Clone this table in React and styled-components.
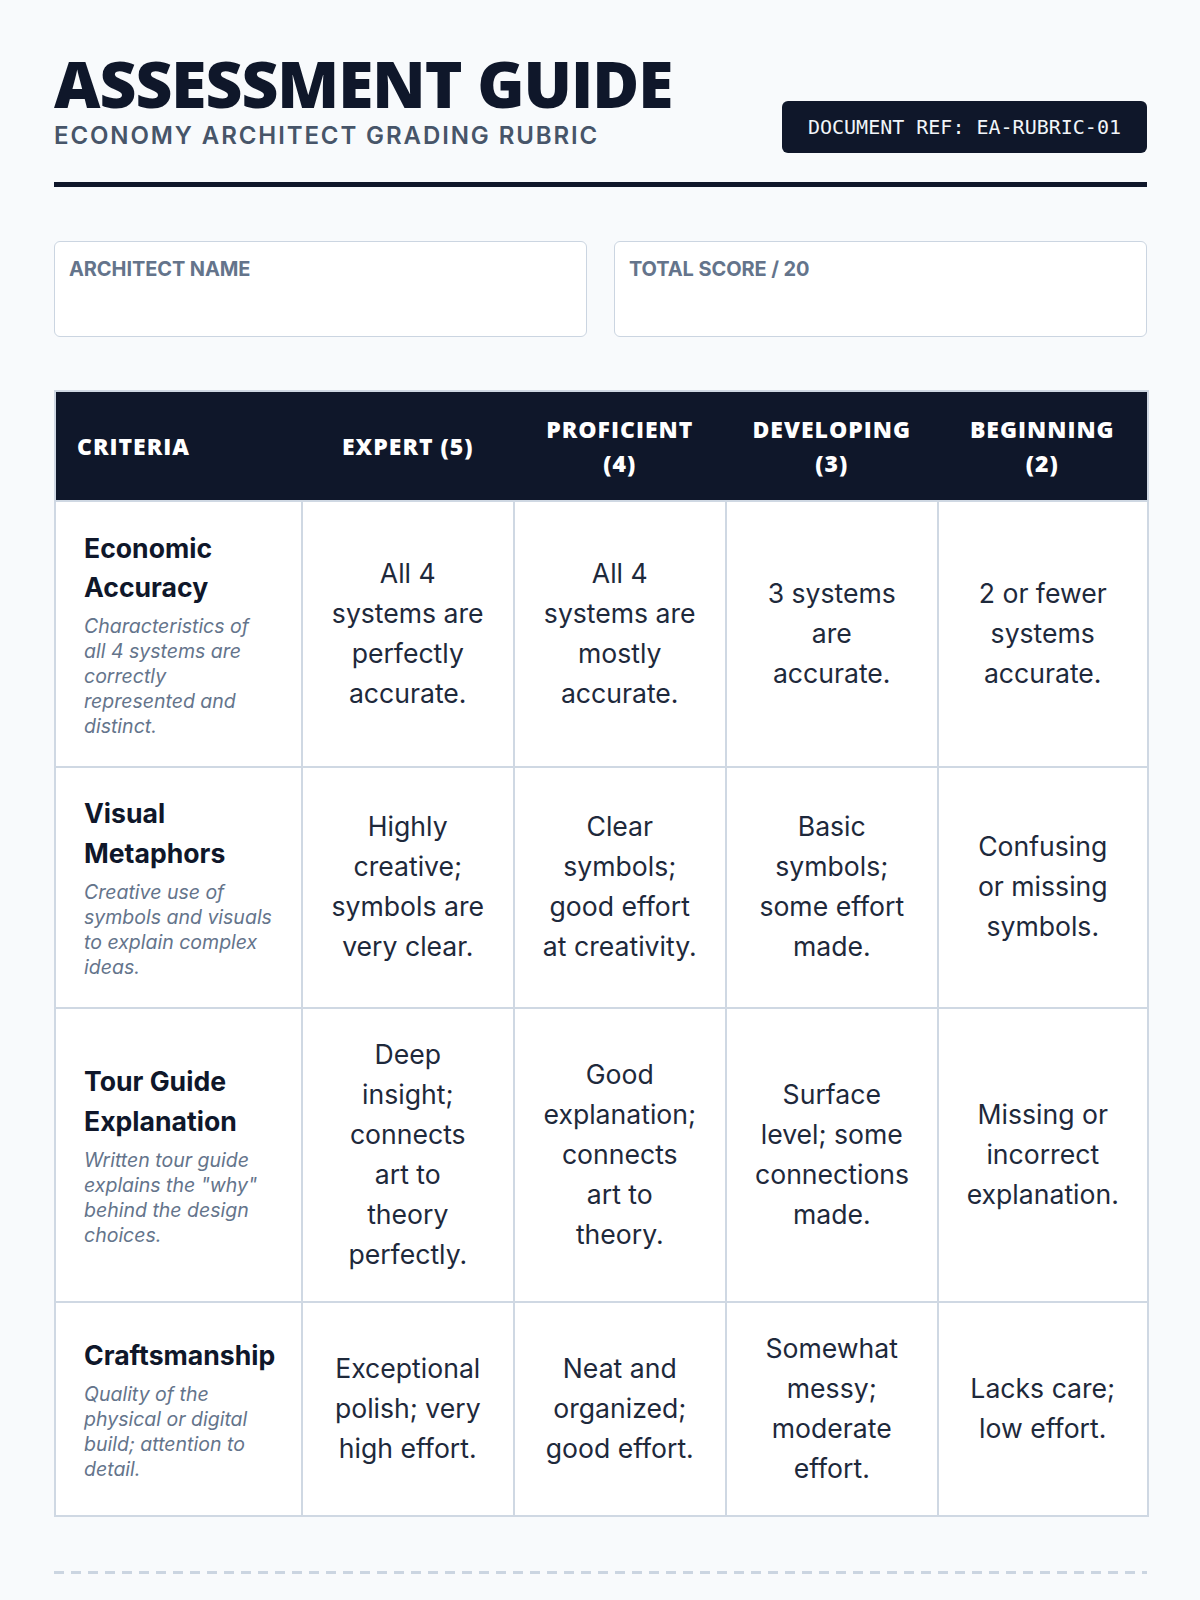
import React from 'react'
import styled, { createGlobalStyle } from 'styled-components'

const GlobalStyle = createGlobalStyle`
  body {
    margin: 0;
    background: #f8fafc;
    font-family: Inter, "Liberation Sans", sans-serif;
    color: #1e293b;
  }
`

const Page = styled.div`
  padding: 52px 53px 40px 54px;
`

const Header = styled.header`
  display: flex;
  justify-content: space-between;
  align-items: flex-end;
  padding-bottom: 29px;
  border-bottom: 5px solid #0f172a;
`

const Title = styled.h1`
  margin: 0;
  font-family: "Open Sans", sans-serif;
  font-weight: 800;
  font-size: 64px;
  line-height: 1;
  letter-spacing: -1px;
  color: #0f172a;
`

const Subtitle = styled.p`
  margin: 3px 0 0;
  font-size: 24px;
  font-weight: 600;
  line-height: 34px;
  letter-spacing: 1.9px;
  color: #475569;
`

const RefBadge = styled.div`
  display: flex;
  align-items: center;
  height: 52px;
  padding: 0 26px;
  background: #0f172a;
  color: #f1f5f9;
  border-radius: 6px;
  font-family: "DejaVu Sans Mono", monospace;
  font-size: 20px;
`

const Fields = styled.section`
  display: grid;
  grid-template-columns: 1fr 1fr;
  gap: 27px;
  margin-top: 54px;
`

const Field = styled.div`
  box-sizing: border-box;
  height: 96px;
  padding: 16px 14px;
  background: #fff;
  border: 1.5px solid #cbd5e1;
  border-radius: 6px;
`

const FieldLabel = styled.div`
  font-size: 20px;
  font-weight: 700;
  line-height: 22px;
  letter-spacing: -0.1px;
  color: #64748b;
`

const Rubric = styled.table`
  width: 100%;
  margin-top: 53px;
  border-collapse: collapse;
  table-layout: fixed;
  background: #fff;
  border: 2px solid #cfd8e3;
`

const HeadCell = styled.th`
  padding: 20px 21px;
  background: #0f172a;
  color: #fff;
  font-family: "Open Sans", sans-serif;
  font-weight: 800;
  font-size: 23px;
  line-height: 34px;
  letter-spacing: 1px;
  text-align: ${p => (p.$left ? 'left' : 'center')};
  vertical-align: middle;
`

const Cell = styled.td`
  padding: 26.5px 28px;
  border: 2px solid #cfd8e3;
  font-size: 26.6px;
  line-height: 1.5;
  text-align: center;
  vertical-align: middle;
  color: #1e293b;
`

const CriteriaCell = styled(Cell)`
  text-align: left;
`

const CriteriaName = styled.div`
  font-weight: 700;
  color: #0f172a;
`

const CriteriaNote = styled.div`
  margin-top: 6px;
  font-size: 19.5px;
  line-height: 25px;
  font-style: italic;
  color: #64748b;
`

const Footer = styled.footer`
  margin-top: 54px;
  height: 3px;
  background: repeating-linear-gradient(90deg, #cbd5e1 0 10px, transparent 10px 17px);
`

const columnWidths = [247, 211.5, 212.5, 211.5, 210.5]

const levels = [
  ['EXPERT (5)'],
  ['PROFICIENT', '(4)'],
  ['DEVELOPING', '(3)'],
  ['BEGINNING', '(2)'],
]

const rows = [
  {
    name: 'Economic Accuracy',
    note: 'Characteristics of all 4 systems are correctly represented and distinct.',
    cells: [
      'All 4 systems are perfectly accurate.',
      'All 4 systems are mostly accurate.',
      '3 systems are accurate.',
      '2 or fewer systems accurate.',
    ],
  },
  {
    name: 'Visual Metaphors',
    note: 'Creative use of symbols and visuals to explain complex ideas.',
    cells: [
      'Highly creative; symbols are very clear.',
      'Clear symbols; good effort at creativity.',
      'Basic symbols; some effort made.',
      'Confusing or missing symbols.',
    ],
  },
  {
    name: 'Tour Guide Explanation',
    note: 'Written tour guide explains the "why" behind the design choices.',
    cells: [
      'Deep insight; connects art to theory perfectly.',
      'Good explanation; connects art to theory.',
      'Surface level; some connections made.',
      'Missing or incorrect explanation.',
    ],
  },
  {
    name: 'Craftsmanship',
    note: 'Quality of the physical or digital build; attention to detail.',
    cells: [
      'Exceptional polish; very high effort.',
      'Neat and organized; good effort.',
      'Somewhat messy; moderate effort.',
      'Lacks care; low effort.',
    ],
  },
]

export default function App() {
  return (
    <Page>
      <GlobalStyle />
      <Header>
        <div>
          <Title>ASSESSMENT GUIDE</Title>
          <Subtitle>ECONOMY ARCHITECT GRADING RUBRIC</Subtitle>
        </div>
        <RefBadge>DOCUMENT REF: EA-RUBRIC-01</RefBadge>
      </Header>

      <Fields>
        <Field>
          <FieldLabel>ARCHITECT NAME</FieldLabel>
        </Field>
        <Field>
          <FieldLabel>TOTAL SCORE / 20</FieldLabel>
        </Field>
      </Fields>

      <Rubric>
        <colgroup>
          {columnWidths.map((w, i) => (
            <col key={i} style={{ width: w }} />
          ))}
        </colgroup>
        <thead>
          <tr>
            <HeadCell $left>CRITERIA</HeadCell>
            {levels.map(([label, score]) => (
              <HeadCell key={label}>
                {label}
                {score && <br />}
                {score}
              </HeadCell>
            ))}
          </tr>
        </thead>
        <tbody>
          {rows.map(row => (
            <tr key={row.name}>
              <CriteriaCell>
                <CriteriaName>{row.name}</CriteriaName>
                <CriteriaNote>{row.note}</CriteriaNote>
              </CriteriaCell>
              {row.cells.map(text => (
                <Cell key={text}>{text}</Cell>
              ))}
            </tr>
          ))}
        </tbody>
      </Rubric>

      <Footer />
    </Page>
  )
}
